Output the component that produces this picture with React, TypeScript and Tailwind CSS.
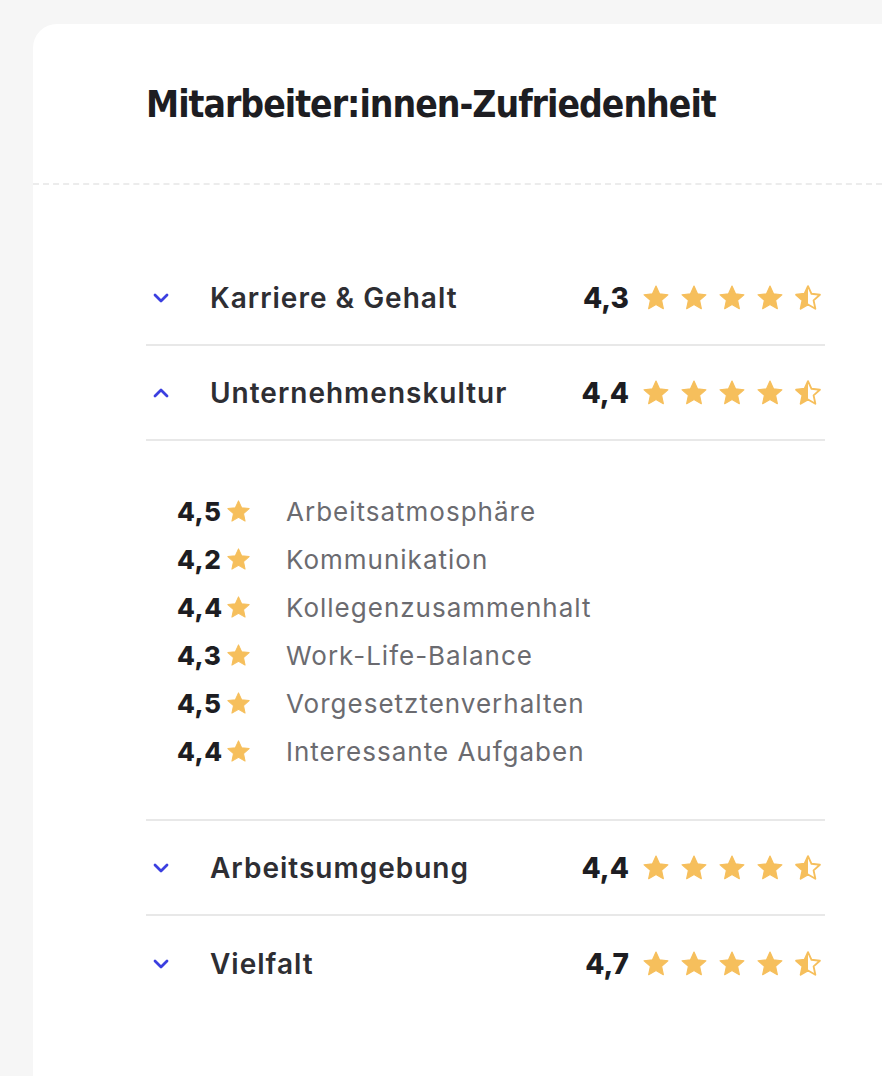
import { useState } from 'react'

const STAR = '12,1.8 15,8.4 22.2,9.2 16.8,14 18.3,21.2 12,17.6 5.7,21.2 7.2,14 1.8,9.2 9,8.4'

function Star({ size, half = false }: { size: number; half?: boolean }) {
  if (!half) {
    return (
      <svg width={size} height={size} viewBox="0 0 24 24" className="shrink-0">
        <polygon points={STAR} fill="#f6bf5c" stroke="#f6bf5c" strokeWidth="1" strokeLinejoin="round" />
      </svg>
    )
  }
  return (
    <svg width={size} height={size} viewBox="0 0 24 24" className="shrink-0">
      <defs>
        <clipPath id="half-left">
          <rect x="0" y="0" width="12" height="24" />
        </clipPath>
      </defs>
      <polygon points={STAR} fill="#f6bf5c" clipPath="url(#half-left)" />
      <polygon points={STAR} fill="none" stroke="#f6bf5c" strokeWidth="1.6" strokeLinejoin="round" />
    </svg>
  )
}

function Chevron({ up }: { up: boolean }) {
  return (
    <svg width="16" height="10" viewBox="0 0 16 10" className={up ? 'rotate-180' : ''}>
      <path d="M2 2 L8 8 L14 2" fill="none" stroke="#3b3fe0" strokeWidth="2.8" strokeLinecap="round" strokeLinejoin="round" />
    </svg>
  )
}

type Category = {
  name: string
  score: string
  items?: { score: string; label: string }[]
}

const categories: Category[] = [
  { name: 'Karriere & Gehalt', score: '4,3' },
  {
    name: 'Unternehmenskultur',
    score: '4,4',
    items: [
      { score: '4,5', label: 'Arbeitsatmosphäre' },
      { score: '4,2', label: 'Kommunikation' },
      { score: '4,4', label: 'Kollegenzusammenhalt' },
      { score: '4,3', label: 'Work-Life-Balance' },
      { score: '4,5', label: 'Vorgesetztenverhalten' },
      { score: '4,4', label: 'Interessante Aufgaben' },
    ],
  },
  { name: 'Arbeitsumgebung', score: '4,4' },
  { name: 'Vielfalt', score: '4,7' },
]

export default function App() {
  const [open, setOpen] = useState('Unternehmenskultur')

  return (
    <div className="min-h-[1076px] bg-[#f6f6f6] pl-[33px] pt-[24px] font-['Inter',sans-serif]">
      <div className="min-h-[1052px] rounded-tl-[24px] bg-white">
        <div className="flex h-[161px] items-center border-b-2 border-dashed border-[#ececec] pl-[113px] pt-[3px]">
          <h2 className="font-['Liberation_Sans_Narrow','DejaVu_Sans_Condensed','Inter',sans-serif] text-[37px] font-bold tracking-[-1px] text-[#1d1d22]">
            Mitarbeiter:innen-Zufriedenheit
          </h2>
        </div>

        <div className="pl-[113px] pr-[57px] pt-[66px]">
          {categories.map((cat, i) => {
            const isOpen = open === cat.name
            const last = i === categories.length - 1
            return (
              <div key={cat.name}>
                <button
                  onClick={() => setOpen(isOpen ? '' : cat.name)}
                  className={`flex h-[95px] w-full items-center text-left ${last ? '' : 'border-b-2 border-[#e8e8e8]'}`}
                >
                  <span className="flex w-[64px] pl-[7px]">
                    <Chevron up={isOpen} />
                  </span>
                  <span className="flex-1 text-[28px] font-semibold tracking-[1px] text-[#2e2e33]">{cat.name}</span>
                  <span className="flex items-center">
                    <span className="mr-[13px] text-[28px] font-extrabold text-[#1d1d22]">{cat.score}</span>
                    <span className="flex items-center gap-[10px] pr-[3px]">
                      <Star size={28} />
                      <Star size={28} />
                      <Star size={28} />
                      <Star size={28} />
                      <Star size={28} half />
                    </span>
                  </span>
                </button>
                {isOpen && cat.items && (
                  <div className="border-b-2 border-[#e8e8e8] pb-[44px] pl-[31px] pt-[46px]">
                    {cat.items.map((item) => (
                      <div key={item.label} className="flex h-[48px] items-center">
                        <span className="w-[45px] text-[26px] font-extrabold tracking-[0.5px] text-[#1d1d22]">{item.score}</span>
                        <span className="ml-[4px]">
                          <Star size={25} />
                        </span>
                        <span className="ml-[35px] text-[26px] tracking-[1px] text-[#6b6b70]">{item.label}</span>
                      </div>
                    ))}
                  </div>
                )}
              </div>
            )
          })}
        </div>
      </div>
    </div>
  )
}
